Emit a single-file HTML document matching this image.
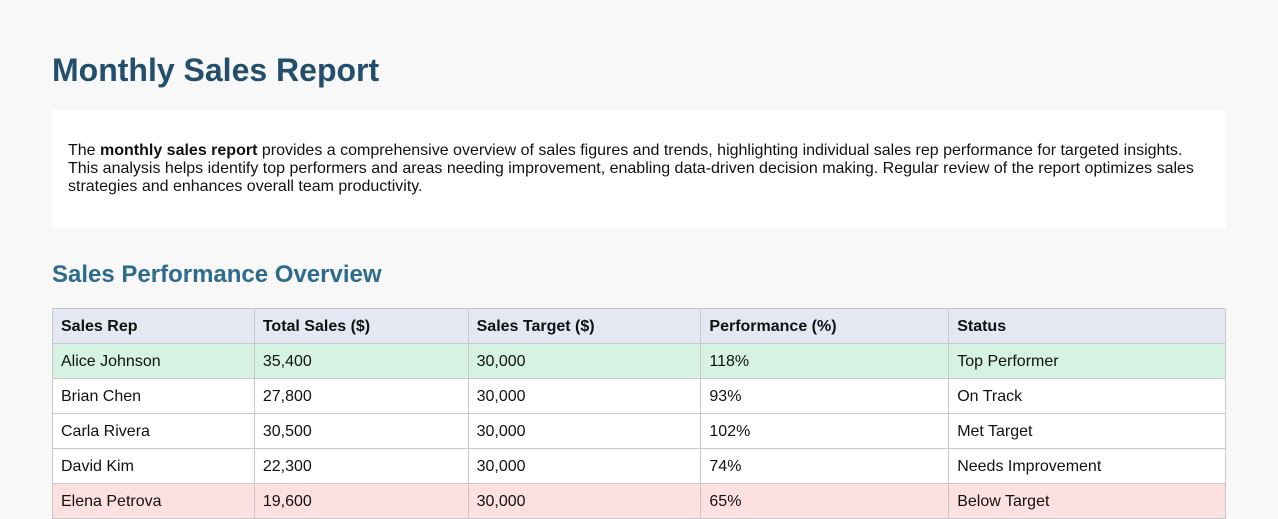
<!DOCTYPE html>
<html><head><meta charset="utf-8"><style>
body{margin:0;background:#f8f8f8;font-family:"Liberation Sans",Arial,sans-serif;color:#111;width:1278px;height:501px;overflow:hidden}
h1{position:absolute;left:52px;top:50px;margin:0;font-size:32px;line-height:40px;color:#234e6c;font-weight:bold}
.box{position:absolute;left:52px;top:110px;width:1174px;height:118px;background:#fff;box-sizing:border-box;padding:32px 16px 0 16px;font-size:16px;line-height:18px}
h2{position:absolute;left:52px;top:261px;margin:0;font-size:24px;line-height:28px;color:#2e6b8c;font-weight:bold}
table{position:absolute;left:52px;top:308px;border-collapse:collapse;width:1174px;font-size:16px;background:#fff}
td,th{border:1px solid #c8c8c8;height:35px;padding:1px 8px 0 8px;text-align:left;box-sizing:border-box}
th{background:#e3e8f2;font-weight:bold}
.g td{background:#d5f2e3}.r td{background:#fde0e0}
</style></head><body>
<h1>Monthly Sales Report</h1>
<div class="box">The <b>monthly sales report</b> provides a comprehensive overview of sales figures and trends, highlighting individual sales rep performance for targeted insights. This analysis helps identify top performers and areas needing improvement, enabling data-driven decision making. Regular review of the report optimizes sales strategies and enhances overall team productivity.</div>
<h2>Sales Performance Overview</h2>
<table>
<colgroup><col style="width:202px"><col style="width:214px"><col style="width:233px"><col style="width:248px"><col style="width:277px"></colgroup>
<tr><th>Sales Rep</th><th>Total Sales ($)</th><th>Sales Target ($)</th><th>Performance (%)</th><th>Status</th></tr>
<tr class="g"><td>Alice Johnson</td><td>35,400</td><td>30,000</td><td>118%</td><td>Top Performer</td></tr>
<tr><td>Brian Chen</td><td>27,800</td><td>30,000</td><td>93%</td><td>On Track</td></tr>
<tr><td>Carla Rivera</td><td>30,500</td><td>30,000</td><td>102%</td><td>Met Target</td></tr>
<tr><td>David Kim</td><td>22,300</td><td>30,000</td><td>74%</td><td>Needs Improvement</td></tr>
<tr class="r"><td>Elena Petrova</td><td>19,600</td><td>30,000</td><td>65%</td><td>Below Target</td></tr>
</table>
</body></html>
